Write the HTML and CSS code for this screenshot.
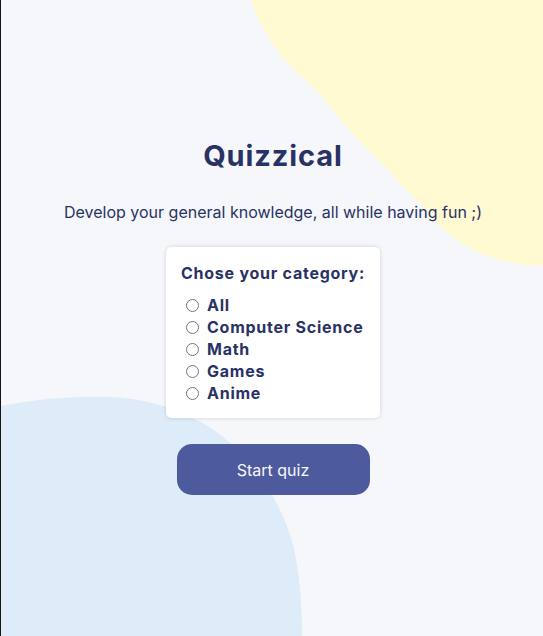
FILE: index.html
```html
<!DOCTYPE html>
<html lang="en">
<head>
<meta charset="utf-8">
<title>Quizzical</title>
<link rel="stylesheet" href="styles.css">
</head>
<body>
<div class="page">
  <svg class="blobs" viewBox="0 0 543 636" preserveAspectRatio="none" aria-hidden="true">
    <path class="blob-yellow" d="M250,0 C262,35 282,62 307,82 C330,105 345,128 365,148 C390,172 415,200 440,227 C465,250 495,265 543,266 L543,0 Z"/>
    <path class="blob-blue" d="M0,406 C40,398 80,396 110,397 C150,399 180,410 210,428 C250,455 280,500 292,545 C298,570 301,600 301,636 L0,636 Z"/>
  </svg>
  <main class="intro">
    <h1 class="title">Quizzical</h1>
    <p class="subtitle">Develop your general knowledge, all while having fun ;)</p>
    <form class="card">
      <h2 class="card-title">Chose your category:</h2>
      <ul class="options">
        <li><label class="option"><input type="radio" name="category" value="all"><span>All</span></label></li>
        <li><label class="option"><input type="radio" name="category" value="cs"><span>Computer Science</span></label></li>
        <li><label class="option"><input type="radio" name="category" value="math"><span>Math</span></label></li>
        <li><label class="option"><input type="radio" name="category" value="games"><span>Games</span></label></li>
        <li><label class="option"><input type="radio" name="category" value="anime"><span>Anime</span></label></li>
      </ul>
    </form>
    <button class="start" type="button">Start quiz</button>
  </main>
</div>
</body>
</html>
```
FILE: styles.css
```css
* { box-sizing: border-box; }

html, body {
  margin: 0;
  padding: 0;
}

body {
  background: #F5F7FB;
  font-family: "Inter", "Noto Sans", sans-serif;
  color: #293264;
}

.page {
  position: relative;
  min-height: 100vh;
  height: 636px;
  overflow: hidden;
  border-left: 1px solid #141414;
  background: #F5F7FB;
}

.blobs {
  position: absolute;
  left: 0;
  top: 0;
  width: 543px;
  height: 636px;
  z-index: 0;
}

.blob-yellow { fill: #FFFAD1; }
.blob-blue { fill: #DEEBF8; }

.intro {
  position: relative;
  z-index: 1;
  display: flex;
  flex-direction: column;
  align-items: center;
  padding-top: 138px;
  padding-left: 2px;
}

.title {
  margin: 0;
  font-size: 29px;
  line-height: 36px;
  font-weight: 700;
  letter-spacing: 0.9px;
  color: #293264;
}

.subtitle {
  margin: 29px 0 0;
  font-size: 16px;
  line-height: 19px;
  font-weight: 400;
  color: #293264;
}

.card {
  margin-top: 25px;
  width: 214px;
  background: #fff;
  border-radius: 5px;
  box-shadow: 0 0 4px rgba(0, 0, 0, 0.16);
  padding: 15px 10px 14px 15px;
}

.card-title {
  margin: 0;
  font-size: 16px;
  line-height: 22px;
  font-weight: 700;
  letter-spacing: 0.75px;
  white-space: nowrap;
  color: #293264;
}

.options {
  list-style: none;
  margin: 10px 0 0;
  padding: 0 0 0 5px;
}

.option {
  display: flex;
  align-items: center;
  height: 22px;
  font-size: 16px;
  font-weight: 700;
  letter-spacing: 0.75px;
  white-space: nowrap;
  color: #293264;
}

.option input {
  width: 13px;
  height: 13px;
  margin: 0 8px 0 0;
}

.start {
  margin-top: 26px;
  width: 193px;
  height: 51px;
  border: none;
  border-radius: 15px;
  background: #4D5B9E;
  color: #F5F7FB;
  font-family: "Inter", "Noto Sans", sans-serif;
  font-size: 16px;
  font-weight: 400;
  cursor: pointer;
}
```
